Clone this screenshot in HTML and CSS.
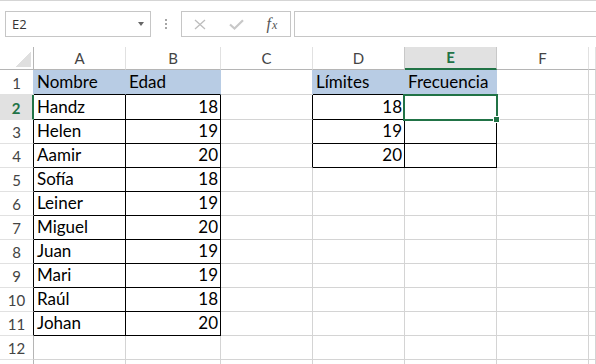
FILE: index.html
```html
<!DOCTYPE html>
<html lang="es">
<head>
<meta charset="utf-8">
<title>Hoja</title>
<link rel="stylesheet" href="styles.css">
</head>
<body>
<div class="topbar">
  <div class="namebox"><span>E2</span><span class="caret"></span></div>
  <div class="grip"><span></span><span></span><span></span></div>
  <div class="fxbox">
    <div class="btn"><svg width="12" height="11" viewBox="0 0 12 11"><path d="M1 1 L11 10 M11 1 L1 10" stroke="#bdbdbd" stroke-width="1.3" fill="none"/></svg></div>
    <div class="btn"><svg width="15" height="11" viewBox="0 0 15 11"><path d="M1 5.5 L5.5 9.5 L14 1.2" fill="none" stroke="#c8c8c8" stroke-width="2.2"/></svg></div>
    <div class="btn"><span class="fx"><i class="f">f</i><i class="x">x</i></span></div>
  </div>
  <div class="formula"></div>
</div>
<div class="sheet">
  <div class="c ch corner"><span class="tri"></span></div>
  <div class="c ch">A</div><div class="c ch">B</div><div class="c ch">C</div><div class="c ch dk">D</div><div class="c ch sel dk">E</div><div class="c ch">F</div><div class="c ch"></div>

  <div class="c rh fr">1</div>
  <div class="c fill bb">Nombre</div><div class="c fill bb">Edad</div><div class="c fr"></div><div class="c fill bb">Límites</div><div class="c fill bb">Frecuencia</div><div class="c"></div><div class="c"></div>

  <div class="c rh sel">2</div>
  <div class="c br bb">Handz</div><div class="c n br bb">18</div><div class="c br"></div><div class="c n br bb">18</div><div class="c br bb active"><span class="selbox"></span><span class="handle"></span></div><div class="c"></div><div class="c"></div>

  <div class="c rh br">3</div>
  <div class="c br bb">Helen</div><div class="c n br bb">19</div><div class="c br"></div><div class="c n br bb">19</div><div class="c br bb"></div><div class="c"></div><div class="c"></div>

  <div class="c rh br">4</div>
  <div class="c br bb">Aamir</div><div class="c n br bb">20</div><div class="c br"></div><div class="c n br bb">20</div><div class="c br bb"></div><div class="c"></div><div class="c"></div>

  <div class="c rh br">5</div>
  <div class="c br bb">Sofía</div><div class="c n br bb">18</div><div class="c"></div><div class="c"></div><div class="c"></div><div class="c"></div><div class="c"></div>

  <div class="c rh br">6</div>
  <div class="c br bb">Leiner</div><div class="c n br bb">19</div><div class="c"></div><div class="c"></div><div class="c"></div><div class="c"></div><div class="c"></div>

  <div class="c rh br">7</div>
  <div class="c br bb">Miguel</div><div class="c n br bb">20</div><div class="c"></div><div class="c"></div><div class="c"></div><div class="c"></div><div class="c"></div>

  <div class="c rh br">8</div>
  <div class="c br bb">Juan</div><div class="c n br bb">19</div><div class="c"></div><div class="c"></div><div class="c"></div><div class="c"></div><div class="c"></div>

  <div class="c rh br">9</div>
  <div class="c br bb">Mari</div><div class="c n br bb">19</div><div class="c"></div><div class="c"></div><div class="c"></div><div class="c"></div><div class="c"></div>

  <div class="c rh br">10</div>
  <div class="c br bb">Raúl</div><div class="c n br bb">18</div><div class="c"></div><div class="c"></div><div class="c"></div><div class="c"></div><div class="c"></div>

  <div class="c rh br">11</div>
  <div class="c br bb">Johan</div><div class="c n br bb">20</div><div class="c"></div><div class="c"></div><div class="c"></div><div class="c"></div><div class="c"></div>

  <div class="c rh">12</div>
  <div class="c"></div><div class="c"></div><div class="c"></div><div class="c"></div><div class="c"></div><div class="c"></div><div class="c"></div>

  <div class="c rh"></div>
  <div class="c"></div><div class="c"></div><div class="c"></div><div class="c"></div><div class="c"></div><div class="c"></div><div class="c"></div>
</div>
</body>
</html>
```

FILE: styles.css
```css
* { box-sizing: border-box; }
html, body { margin: 0; padding: 0; background: #fff; }
body {
  width: 596px;
  height: 364px;
  overflow: hidden;
  font-family: Lato, "Liberation Sans", sans-serif;
}

.topbar {
  display: flex;
  align-items: flex-start;
  height: 47px;
  border-top: 1px solid #d5d5d5;
  padding: 10px 0 0 5px;
}
.namebox {
  width: 146px;
  height: 26px;
  border: 1px solid #c6c6c6;
  display: flex;
  align-items: center;
  justify-content: space-between;
  padding: 0 6px 0 6px;
  font-family: "Open Sans", "Liberation Sans", sans-serif;
  font-size: 13px;
  color: #333;
}
.caret {
  width: 0;
  height: 0;
  border-left: 3.5px solid transparent;
  border-right: 3.5px solid transparent;
  border-top: 4px solid #666;
  margin-top: -1px;
}
.grip {
  width: 30px;
  margin-top: 8px;
  display: flex;
  flex-direction: column;
  align-items: center;
  gap: 2px;
}
.grip span { width: 2px; height: 2px; background: #a6a6a6; }
.fxbox {
  width: 110px;
  height: 26px;
  border: 1px solid #c6c6c6;
  display: flex;
}
.fxbox .btn {
  width: 36px;
  display: flex;
  align-items: center;
  justify-content: center;
}
.fx {
  font-family: "Liberation Serif", serif;
  color: #555;
  line-height: 1;
  display: flex;
  align-items: baseline;
}
.fx .f { font-size: 16px; }
.fx .x { font-size: 12px; margin-left: 1px; }
.formula {
  flex: 1;
  height: 26px;
  margin-left: 3px;
  margin-right: -3px;
  border: 1px solid #c6c6c6;
}

.sheet {
  display: grid;
  grid-template-columns: 34px 92px 95px 92px 92px 92px 92px 1fr;
  grid-template-rows: 23px 25px 25px repeat(11, 24px);
}
.c {
  border-right: 1px solid #d4d4d4;
  border-bottom: 1px solid #d4d4d4;
  display: flex;
  align-items: flex-end;
  padding: 0 2px 2px 3px;
  font-size: 17px;
  line-height: 20px;
  color: #000;
  white-space: nowrap;
  overflow: hidden;
}
.n { justify-content: flex-end; }

.ch {
  border-right-color: #e1e1e1;
  border-bottom-color: #b5b5b5;
  align-items: center;
  justify-content: center;
  font-size: 15px;
  color: #444;
  padding: 0 0 1px;
}
.ch.dk { border-right-color: #c8c8c8; }
.corner {
  justify-content: flex-end;
  align-items: flex-end;
  padding: 0 2px 2px 0;
  border-right-color: #b5b5b5;
}
.tri {
  width: 15px;
  height: 16px;
  background: linear-gradient(to bottom right, transparent 50%, #dfdfdf 50%);
}
.rh {
  border-right-color: #b5b5b5;
  border-bottom-color: #e1e1e1;
  justify-content: center;
  font-size: 15px;
  color: #444;
  padding: 0 0 1px;
}
.ch.sel {
  background: #e1e1e1;
  border-bottom: 2px solid #217346;
  color: #217346;
  font-weight: bold;
}
.rh.sel {
  background: #e1e1e1;
  border-right: 2px solid #217346;
  color: #217346;
  font-weight: bold;
}

.fill { background: #b8cce4; border-right-color: #b8cce4; }
.fr { border-right-color: #b8cce4; }
.br { border-right-color: #000; }
.bb { border-bottom-color: #000; }

.active { position: relative; overflow: visible; }
.selbox {
  position: absolute;
  left: -2px;
  top: -1px;
  right: -2px;
  bottom: -2px;
  border: 2px solid #217346;
}
.handle {
  position: absolute;
  left: 88px;
  top: 21px;
  width: 7px;
  height: 7px;
  background: #217346;
  border: 1px solid #fff;
}
```
